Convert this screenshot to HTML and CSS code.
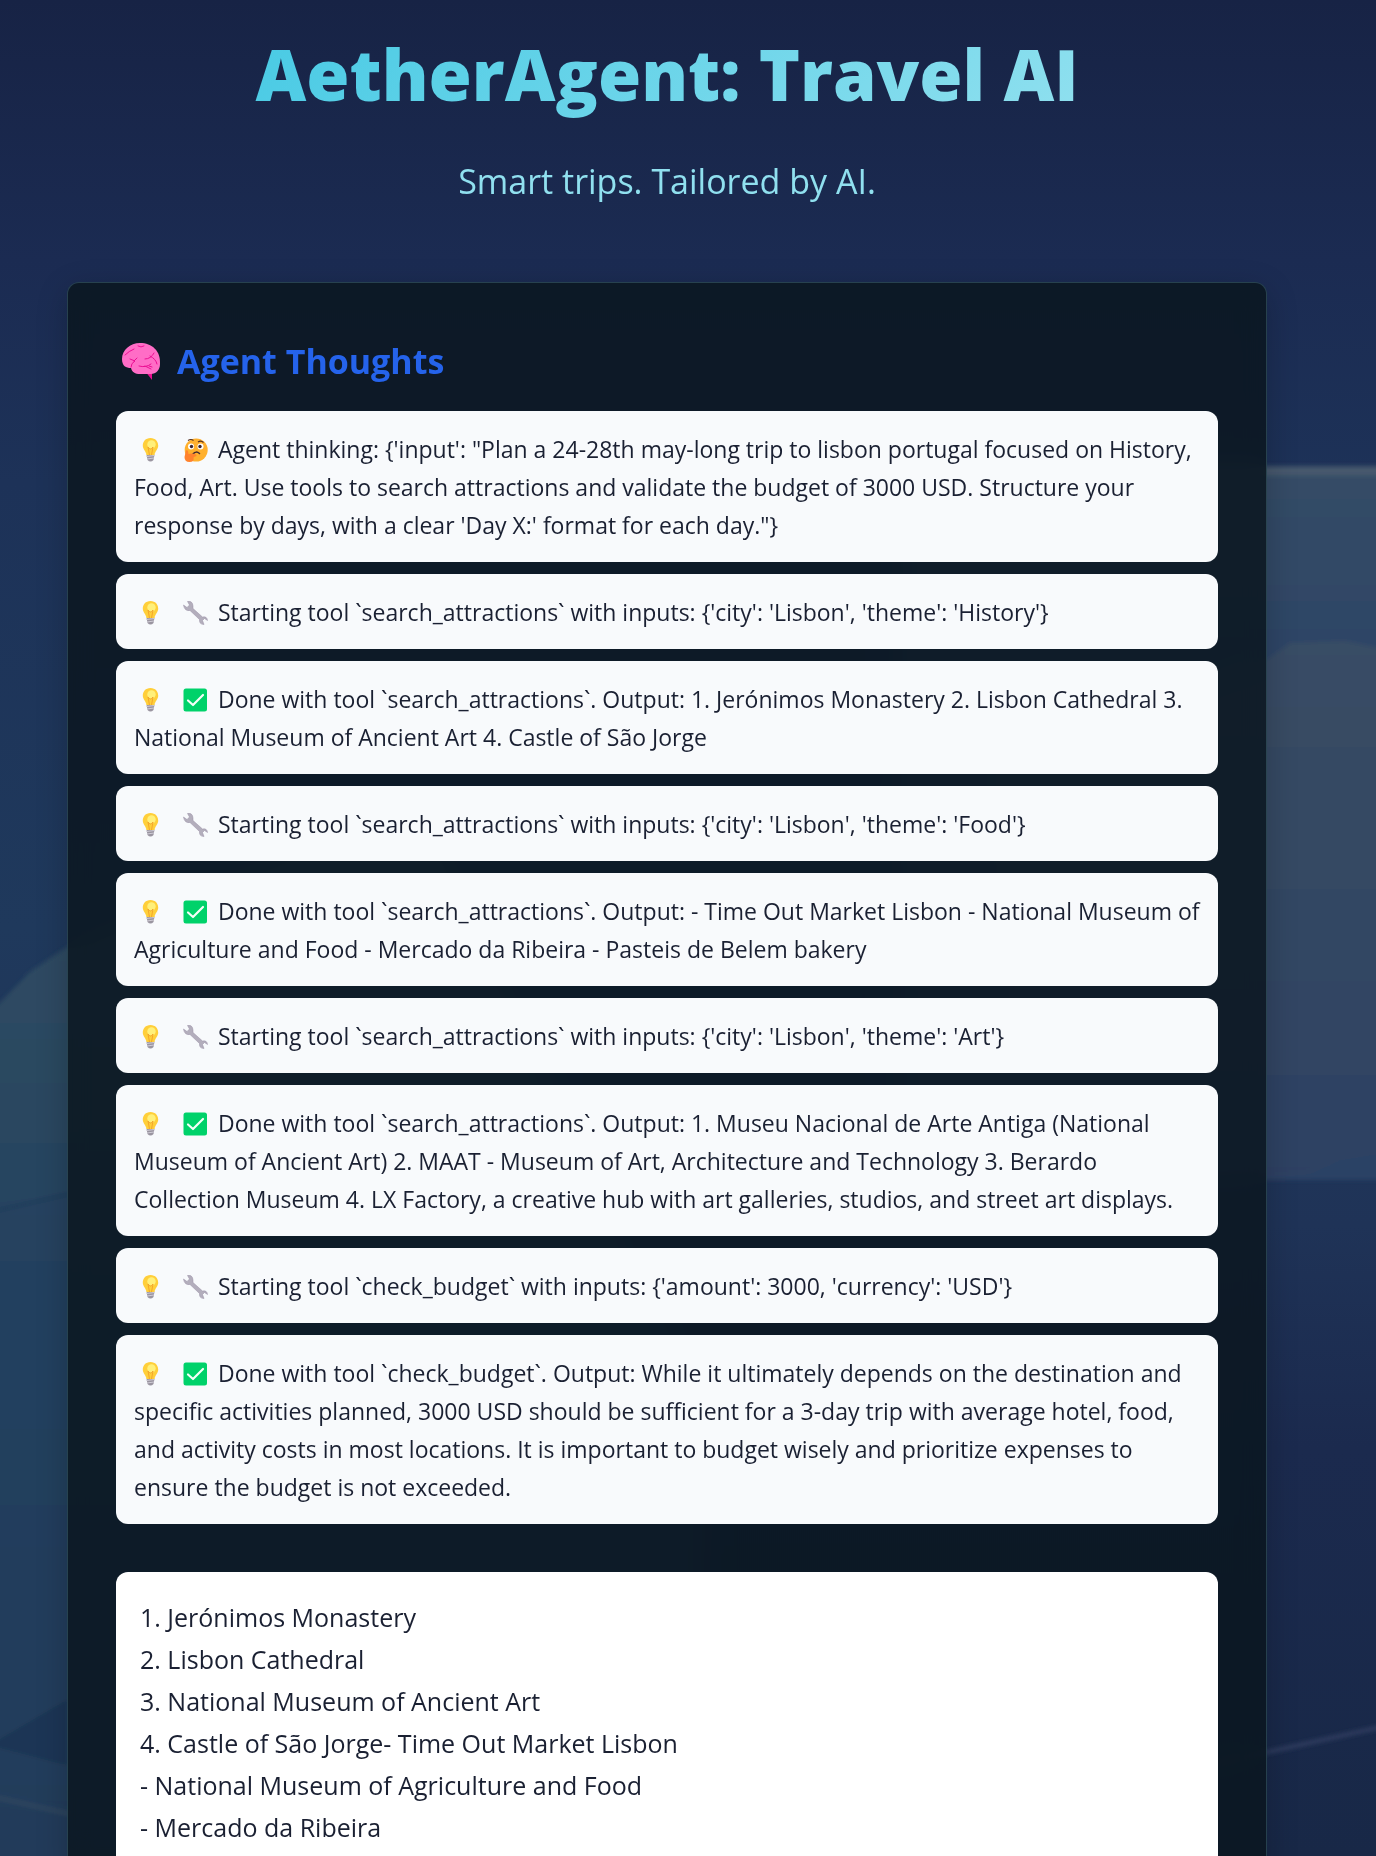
FILE: index.html
```html
<!DOCTYPE html>
<html lang="en">
<head>
<meta charset="utf-8">
<title>AetherAgent: Travel AI</title>
<meta name="viewport" content="width=device-width, initial-scale=1">
<link rel="stylesheet" href="styles.css">
</head>
<body>
<svg class="backdrop" viewBox="0 0 1376 1856" preserveAspectRatio="none" aria-hidden="true">
  <defs>
    <linearGradient id="sky" x1="0" y1="0" x2="0" y2="1">
      <stop offset="0" stop-color="#172345"/><stop offset=".14" stop-color="#1b2b52"/>
      <stop offset=".26" stop-color="#1d3258"/><stop offset=".5" stop-color="#1f395c"/>
      <stop offset=".66" stop-color="#1f3357"/><stop offset=".78" stop-color="#1b2a4e"/><stop offset="1" stop-color="#182847"/>
    </linearGradient>
    <linearGradient id="hill" x1="0" y1="0" x2="0" y2="1">
      <stop offset="0" stop-color="#2f4d63"/><stop offset=".2" stop-color="#2d4a62"/><stop offset=".45" stop-color="#24415f"/><stop offset="1" stop-color="#203b5a"/>
    </linearGradient>
    <linearGradient id="sea" x1="0" y1="0" x2="0" y2="1">
      <stop offset="0" stop-color="#354d66"/><stop offset=".25" stop-color="#2e4566"/><stop offset="1" stop-color="#2c4265"/>
    </linearGradient>
    <linearGradient id="cliff" x1="0" y1="0" x2="0" y2="1">
      <stop offset="0" stop-color="#394d65"/><stop offset="1" stop-color="#2d4163"/>
    </linearGradient>
    <filter id="soft" x="-10%" y="-10%" width="120%" height="120%"><feGaussianBlur stdDeviation="2"/></filter>
  </defs>
  <rect width="1376" height="1856" fill="url(#sky)"/>
  <g filter="url(#soft)">
    <path d="M-10 1013L30 972L67 947L420 800L700 1400V1870H-10Z" fill="url(#hill)"/>
    <path d="M-10 1212L70 1194" stroke="#1f3b5a" stroke-width="3"/>
    <path d="M-10 1745L67 1700V1765L-10 1745Z" fill="#1c3454"/>
    <path d="M-10 1796L70 1814" stroke="#35485f" stroke-width="3"/>
    <path d="M900 466H1390V1180H900Z" fill="url(#sea)"/>
    <path d="M900 471H1390" stroke="#47596d" stroke-width="9"/>
    <path d="M1000 760L1267 660L1290 643L1345 641L1390 650V1152L1340 1160L1310 1174L1267 1178L1000 1200Z" fill="url(#cliff)"/>
    <path d="M1200 1767L1390 1725" stroke="#303e60" stroke-width="4"/>
  </g>
</svg>

<svg class="sprite" aria-hidden="true">
  <symbol id="bulb" viewBox="0 0 33 24">
    <path d="M12.500 16.500H20.500L19.500 22Q16.500 25 13.500 22Z" fill="#9a95a0"/>
    <path d="M12.500 18.500L20.500 17.500M13 21L20 20" stroke="#d0ccd6" stroke-width="1"/>
    <path d="M16.500 0C11.500 0 8.800 3.700 8.800 7.500C8.800 11.500 12 13 12.500 17H20.500C21 13 24.200 11.500 24.200 7.500C24.200 3.700 21.500 0 16.500 0Z" fill="#ffcf3a"/>
    <circle cx="17.500" cy="6.500" r="4.200" fill="#fff07a"/>
    <path d="M14 9L15.500 17M19 9L17.500 17M14 9Q16.500 13 19 9" fill="none" stroke="#f3a62a" stroke-width="1"/>
  </symbol>
  <symbol id="thinking" viewBox="0 0 33 24">
    <circle cx="17.200" cy="12" r="11.500" fill="#ffb02e"/>
    <circle cx="12" cy="8.500" r="3" fill="#fff"/><circle cx="21.500" cy="8.500" r="3" fill="#fff"/>
    <circle cx="12.500" cy="8.500" r="1.700" fill="#3b2430"/><circle cx="21" cy="8.500" r="1.700" fill="#3b2430"/>
    <path d="M9 2.500Q12 .5 14.500 2.500M19 4Q22 2 24.500 4.500" fill="none" stroke="#56301f" stroke-width="1.200"/>
    <path d="M14 16Q17 12.500 20.500 15.500" fill="none" stroke="#402a32" stroke-width="1.500" stroke-linecap="round"/>
    <path d="M7 12.500Q8.500 11.500 9 13.500L9.500 16Q13 15 17 16.500Q18.500 18 16 18.500L14.500 19.500Q15.500 24 10.500 24Q5.500 24 5.500 19Z" fill="#ff822d"/>
  </symbol>
  <symbol id="wrench" viewBox="0 0 33 24">
    <path d="M8.500 .5Q13.500 -.5 14 5L14 7.500L23.500 16Q28 15 28.500 19.500L25.500 17.500L23.500 19.500L25 23.500Q20 23.500 20.500 18.500L11 9.500Q5.500 10.500 4.500 4L8 6.500L10.500 4Z" fill="#b3aebc" stroke="#998ea4" stroke-width=".5"/>
  </symbol>
  <symbol id="done" viewBox="0 0 33 24">
    <rect x="4.500" y=".5" width="23.500" height="23" rx="2.500" fill="#00d26a"/>
    <path d="M9 12.500L14 17L24 7" fill="none" stroke="#f4fff8" stroke-width="2.200" stroke-linecap="round" stroke-linejoin="round"/>
  </symbol>
</svg>

<main class="page">
  <header class="hero">
    <h1 class="hero-title">AetherAgent: Travel AI</h1>
    <p class="hero-tagline">Smart trips. Tailored by AI.</p>
  </header>

  <section class="panel">
    <h2 class="panel-title">
      <svg class="brain" viewBox="0 0 40 38" aria-hidden="true">
        <path d="M24 29L31 38L31 27Z" fill="#ec0e93"/>
        <path d="M19 1C9 1 1 8 1 17C1 24 5 26 10 26C11 30 14 32 19 32H30C35 32 39 28 39 22C40 9 31 1 19 1Z" fill="#ff6dc6"/>
        <path d="M4 13Q8 9 13 7M17 4Q20 6 23 4M9 17L14 19Q10 21 10 25M13 19L16 16M24 17Q30 17 33 11M29 14Q35 17 36 22M18 24Q25 26 30 22M24 24L30 27M28 24L31 25" fill="none" stroke="#ec0e93" stroke-width="1" stroke-linecap="round"/>
      </svg>
      Agent Thoughts
    </h2>

    <ul class="thoughts">
      <li class="thought"><svg class="emoji lead"><use href="#bulb"/></svg><svg class="emoji"><use href="#thinking"/></svg> Agent thinking: {'input': "Plan a 24-28th may-long trip to lisbon portugal focused on History, Food, Art. Use tools to search attractions and validate the budget of 3000 USD. Structure your response by days, with a clear 'Day X:' format for each day."}</li>
      <li class="thought"><svg class="emoji lead"><use href="#bulb"/></svg><svg class="emoji"><use href="#wrench"/></svg> Starting tool `search_attractions` with inputs: {'city': 'Lisbon', 'theme': 'History'}</li>
      <li class="thought"><svg class="emoji lead"><use href="#bulb"/></svg><svg class="emoji"><use href="#done"/></svg> Done with tool `search_attractions`. Output: 1. Jerónimos Monastery 2. Lisbon Cathedral 3. National Museum of Ancient Art 4. Castle of São Jorge</li>
      <li class="thought"><svg class="emoji lead"><use href="#bulb"/></svg><svg class="emoji"><use href="#wrench"/></svg> Starting tool `search_attractions` with inputs: {'city': 'Lisbon', 'theme': 'Food'}</li>
      <li class="thought"><svg class="emoji lead"><use href="#bulb"/></svg><svg class="emoji"><use href="#done"/></svg> Done with tool `search_attractions`. Output: - Time Out Market Lisbon - National Museum of Agriculture and Food - Mercado da Ribeira - Pasteis de Belem bakery</li>
      <li class="thought"><svg class="emoji lead"><use href="#bulb"/></svg><svg class="emoji"><use href="#wrench"/></svg> Starting tool `search_attractions` with inputs: {'city': 'Lisbon', 'theme': 'Art'}</li>
      <li class="thought"><svg class="emoji lead"><use href="#bulb"/></svg><svg class="emoji"><use href="#done"/></svg> Done with tool `search_attractions`. Output: 1. Museu Nacional de Arte Antiga (National Museum of Ancient Art) 2. MAAT - Museum of Art, Architecture and Technology 3. Berardo Collection Museum 4. LX Factory, a creative hub with art galleries, studios, and street art displays.</li>
      <li class="thought"><svg class="emoji lead"><use href="#bulb"/></svg><svg class="emoji"><use href="#wrench"/></svg> Starting tool `check_budget` with inputs: {'amount': 3000, 'currency': 'USD'}</li>
      <li class="thought"><svg class="emoji lead"><use href="#bulb"/></svg><svg class="emoji"><use href="#done"/></svg> Done with tool `check_budget`. Output: While it ultimately depends on the destination and specific activities planned, 3000 USD should be sufficient for a 3-day trip with average hotel, food, and activity costs in most locations. It is important to budget wisely and prioritize expenses to ensure the budget is not exceeded.</li>
    </ul>

    <div class="result">1. Jerónimos Monastery
2. Lisbon Cathedral
3. National Museum of Ancient Art
4. Castle of São Jorge- Time Out Market Lisbon
- National Museum of Agriculture and Food
- Mercado da Ribeira</div>
  </section>
</main>
</body>
</html>
```

FILE: styles.css
```css
* {
  box-sizing: border-box;
}

body {
  margin: 0;
  padding-right: 42px;
  background: #1b2b53;
  color: #1a2032;
  font-family: "Segoe UI", "Open Sans", "Noto Sans", sans-serif;
}

.backdrop {
  position: fixed;
  inset: 0;
  width: 100%;
  height: 100%;
  z-index: -1;
}

.sprite {
  display: none;
}

.page {
  display: flex;
  flex-direction: column;
  max-width: 1200px;
  min-height: 100vh;
  margin: 0 auto;
}

.hero {
  padding: 22px 0 72px;
  text-align: center;
}

.hero-title {
  width: fit-content;
  margin: 0 auto 26px;
  background: linear-gradient(135deg, #48cae4, #90e0ef);
  background-clip: text;
  -webkit-background-clip: text;
  color: transparent;
  font-size: 70px;
  font-weight: 900;
  line-height: 104px;
}

.hero-tagline {
  margin: 0;
  color: #90e0ef;
  font-size: 34px;
  line-height: 58px;
}

.panel {
  display: flex;
  flex: 1;
  flex-direction: column;
  padding: 48px 48px 0;
  border: 1px solid rgba(144, 224, 239, 0.2);
  border-bottom: 0;
  border-radius: 12px 12px 0 0;
  background: rgba(10, 22, 32, 0.86);
  box-shadow: 0 8px 32px rgba(0, 0, 0, 0.2);
  backdrop-filter: blur(12px);
}

.panel-title {
  display: flex;
  align-items: center;
  gap: 16px;
  margin: 0 0 20px;
  padding-left: 5px;
  color: #2563eb;
  font-size: 34px;
  font-weight: 700;
  line-height: 60px;
}

.brain {
  width: 40px;
  height: 38px;
}

.thoughts {
  display: flex;
  flex-direction: column;
  gap: 12px;
  margin: 0 0 48px;
  padding: 0;
  list-style: none;
}

.thought {
  padding: 19px 12px 18px 18px;
  border-radius: 12px;
  background: #f8fafc;
  font-size: 23px;
  line-height: 38px;
}

.emoji {
  width: 33px;
  height: 24px;
  vertical-align: -4px;
}

.lead {
  margin-right: 12px;
}

.result {
  flex: 1;
  padding: 24px;
  border-radius: 12px 12px 0 0;
  background: #fff;
  font-size: 25px;
  line-height: 42px;
  white-space: pre-line;
}
```
